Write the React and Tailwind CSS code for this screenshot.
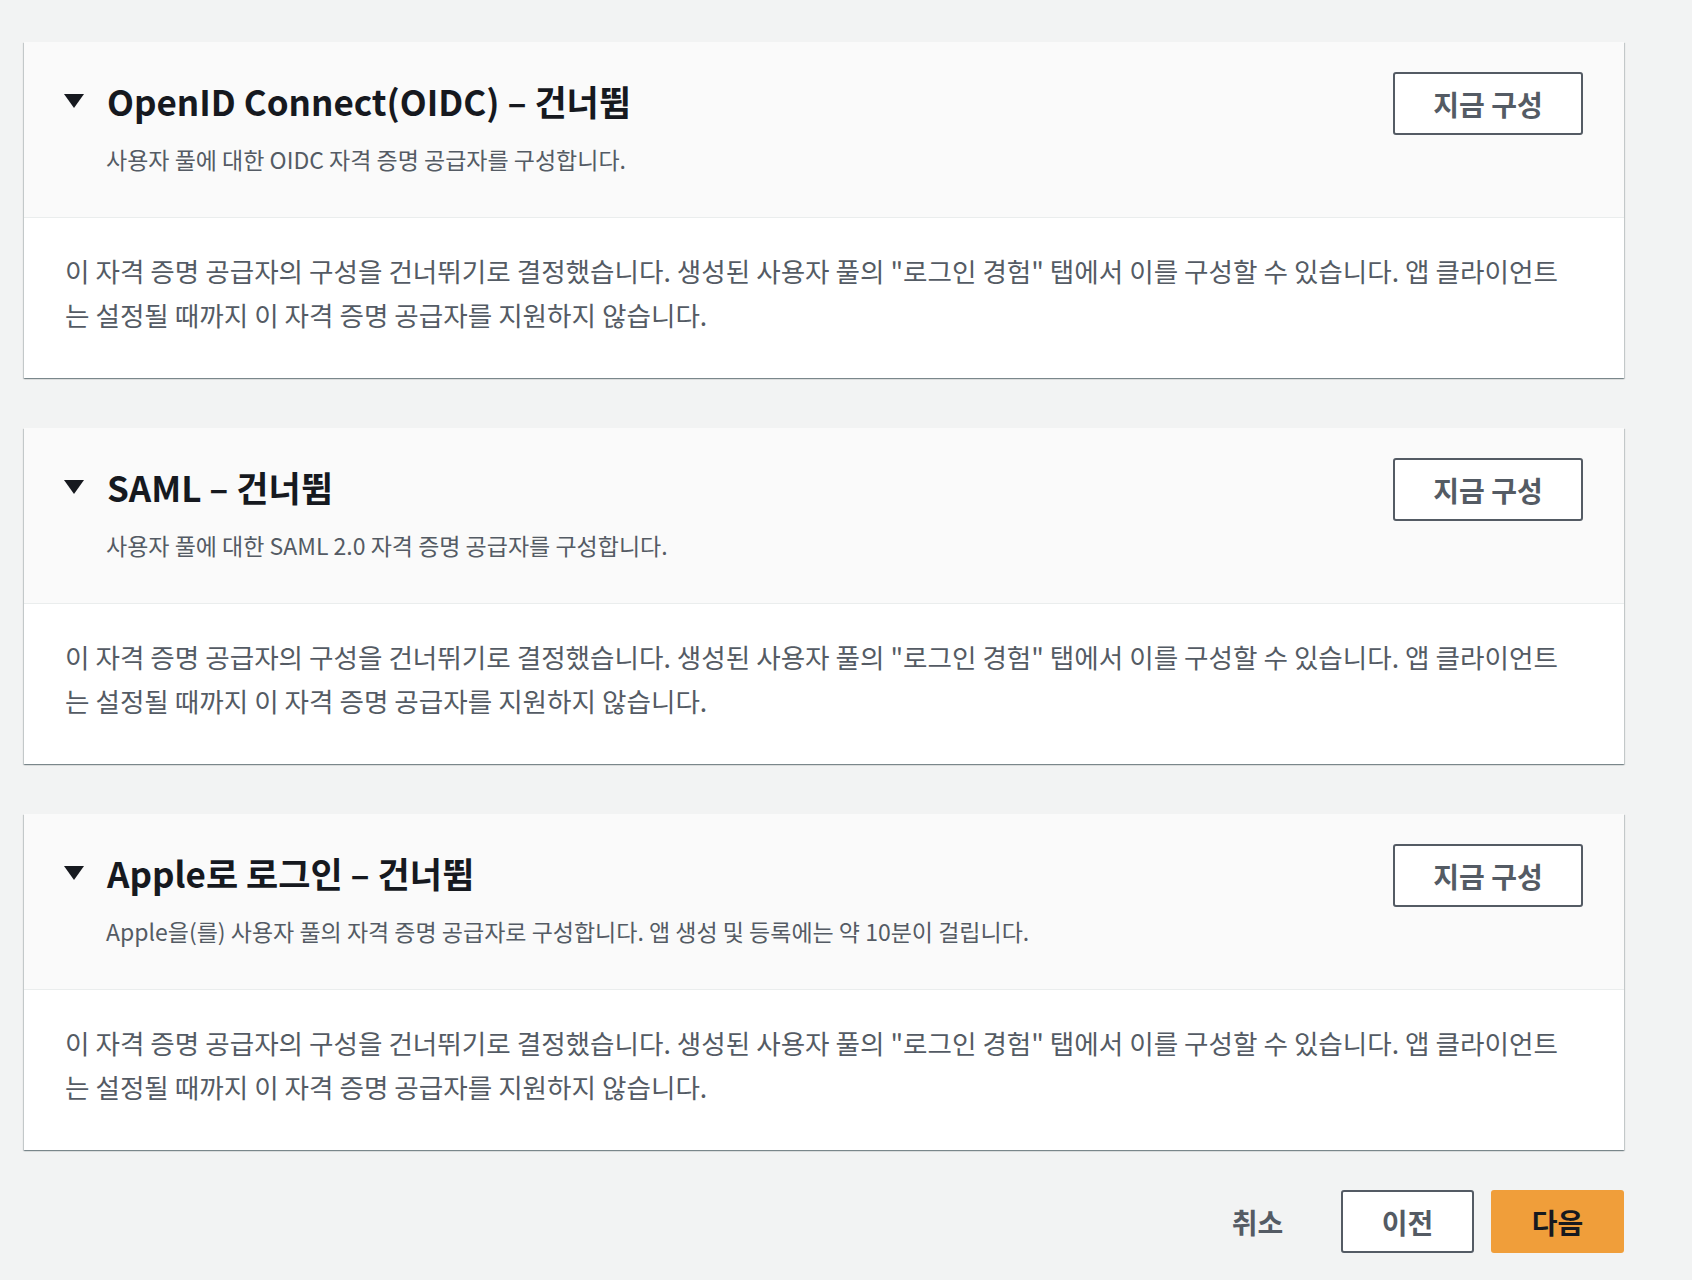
import React from 'react';

const FONT = { fontFamily: '"Noto Sans CJK KR", "Noto Sans", sans-serif' };

const BODY =
  '이 자격 증명 공급자의 구성을 건너뛰기로 결정했습니다. 생성된 사용자 풀의 "로그인 경험" 탭에서 이를 구성할 수 있습니다. 앱 클라이언트는 설정될 때까지 이 자격 증명 공급자를 지원하지 않습니다.';

const providers = [
  { title: 'OpenID Connect(OIDC) – 건너뜀', desc: '사용자 풀에 대한 OIDC 자격 증명 공급자를 구성합니다.' },
  { title: 'SAML – 건너뜀', desc: '사용자 풀에 대한 SAML 2.0 자격 증명 공급자를 구성합니다.' },
  { title: 'Apple로 로그인 – 건너뜀', desc: 'Apple을(를) 사용자 풀의 자격 증명 공급자로 구성합니다. 앱 생성 및 등록에는 약 10분이 걸립니다.' },
];

function Caret() {
  return (
    <svg width="20" height="14" viewBox="0 0 20 14" className="shrink-0">
      <path d="M0 0 H20 L10 14 Z" fill="#16191f" />
    </svg>
  );
}

function ProviderCard({ title, desc }) {
  return (
    <section className="bg-white shadow-[0_1px_1px_0_rgba(0,28,36,0.3),1px_1px_1px_0_rgba(0,28,36,0.15),-1px_1px_1px_0_rgba(0,28,36,0.15)]">
      {/* header */}
      <div className="h-[176px] bg-[#fafafa] border-b border-[#eaeded] flex justify-between pl-[40px] pr-[41px] pt-[30px]">
        <div className="pt-[7px]">
          <div className="flex items-center gap-[23px] h-[44px]">
            <Caret />
            <h2 className="text-[35px] leading-[44px] font-bold text-[#16191f]">{title}</h2>
          </div>
          <p className="mt-[18px] pl-[42px] text-[23px] leading-[36px] text-[#545b64]">{desc}</p>
        </div>
        <button className="w-[190px] h-[63px] shrink-0 rounded-[3px] border-2 border-[#545b64] bg-white text-[28px] font-bold text-[#545b64]">
          지금 구성
        </button>
      </div>
      {/* body */}
      <div className="h-[160px] pl-[41px] pr-[56px] pt-[31px]">
        <p className="text-[26.6px] leading-[44px] text-[#545b64]">{BODY}</p>
      </div>
    </section>
  );
}

export default function App() {
  return (
    <div style={FONT} className="min-h-[1280px] bg-[#f2f3f3] pt-[42px] pl-[24px] pr-[68px]">
      <div className="flex flex-col gap-[50px]">
        {providers.map((p) => (
          <ProviderCard key={p.title} {...p} />
        ))}
      </div>
      <div className="flex justify-end gap-[17px] mt-[40px]">
        <button className="w-[133px] h-[63px] text-[28px] font-bold text-[#545b64]">취소</button>
        <button className="w-[133px] h-[63px] rounded-[3px] border-2 border-[#545b64] bg-white text-[28px] font-bold text-[#545b64]">
          이전
        </button>
        <button className="w-[133px] h-[63px] rounded-[3px] bg-[#f09e3a] text-[28px] font-bold text-[#16191f]">
          다음
        </button>
      </div>
    </div>
  );
}
